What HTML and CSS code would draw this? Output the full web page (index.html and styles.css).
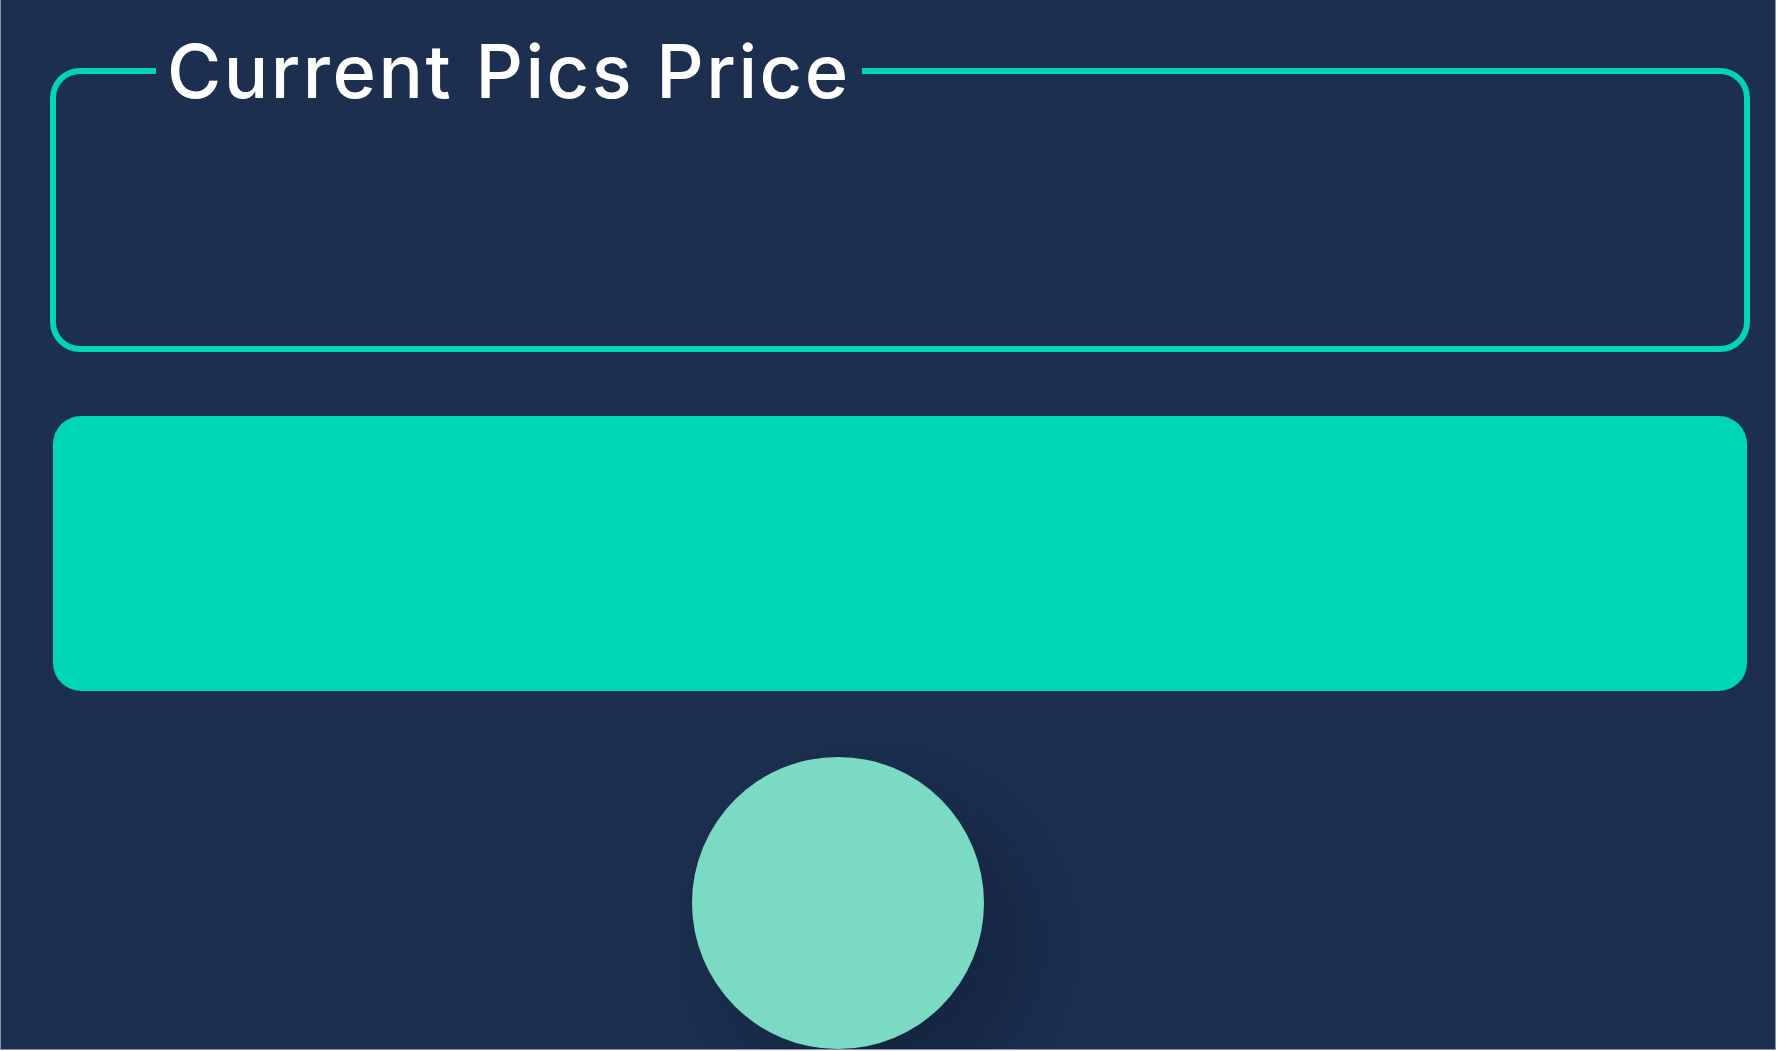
FILE: index.html
```html
<!DOCTYPE html>
<html lang="en">
<head>
<meta charset="utf-8">
<title>Current Pics Price</title>
<link rel="stylesheet" href="styles.css">
</head>
<body>
<main class="screen">
  <fieldset class="price-panel">
    <legend class="price-title">Current Pics Price</legend>
    <div class="price-body"></div>
  </fieldset>
  <section class="price-card"></section>
  <div class="action-circle"></div>
</main>
</body>
</html>
```

FILE: styles.css
```css
html, body {
  margin: 0;
  padding: 0;
  background: #ffffff;
}

.screen {
  box-sizing: border-box;
  width: 1776px;
  height: 1050px;
  background: #1c2f4f;
  border-left: 1px solid #8592a8;
  border-right: 1px solid #8592a8;
  border-bottom: 1px solid #8592a8;
  overflow: hidden;
  display: flex;
  flex-direction: column;
  align-items: flex-start;
  font-family: Inter, "Noto Sans", sans-serif;
}

.price-panel {
  box-sizing: border-box;
  width: 1700px;
  margin: 29px 0 0 49px;
  padding: 0;
  border: 6px solid #00d6b4;
  border-radius: 30px;
}

.price-title {
  margin-left: 100px;
  padding: 0 11px 0 11px;
  color: #ffffff;
  font-size: 74px;
  font-weight: 500;
  line-height: 84px;
  letter-spacing: 2.5px;
}

.price-body {
  height: 233px;
}

.price-card {
  width: 1694px;
  height: 276px;
  margin: 64px 0 0 52px;
  background: #00d6b4;
  border-radius: 28px;
}

.action-circle {
  flex: none;
  width: 292px;
  height: 292px;
  margin: 66px 0 0 691px;
  border-radius: 50%;
  background: #7adac4;
  box-shadow: 40px 40px 80px rgba(10, 20, 40, 0.35);
}
```
